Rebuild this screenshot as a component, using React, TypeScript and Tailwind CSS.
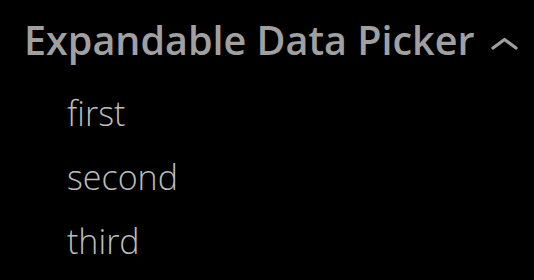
const items = ['first', 'second', 'third']

export default function App() {
  return (
    <div className="w-[534px] h-[280px] bg-black overflow-hidden font-['Open_Sans',sans-serif]">
      <div className="flex items-center pl-[24px] pt-[12px]">
        <span className="text-[39.5px] font-semibold leading-[56px] text-[#a0a0a0]">
          Expandable Data Picker
        </span>
        <svg className="ml-[16px] mt-[6px]" width="27" height="13" viewBox="0 0 27 13" fill="none">
          <polyline
            points="2,11 13.5,2.5 25,11"
            stroke="#a0a0a0"
            strokeWidth="3.2"
            strokeLinecap="round"
            strokeLinejoin="round"
          />
        </svg>
      </div>
      <ul className="pl-[67px] mt-[13px]">
        {items.map((item) => (
          <li key={item} className="text-[34px] font-light leading-[64px] text-[#bcbcbc]">
            {item}
          </li>
        ))}
      </ul>
    </div>
  )
}
